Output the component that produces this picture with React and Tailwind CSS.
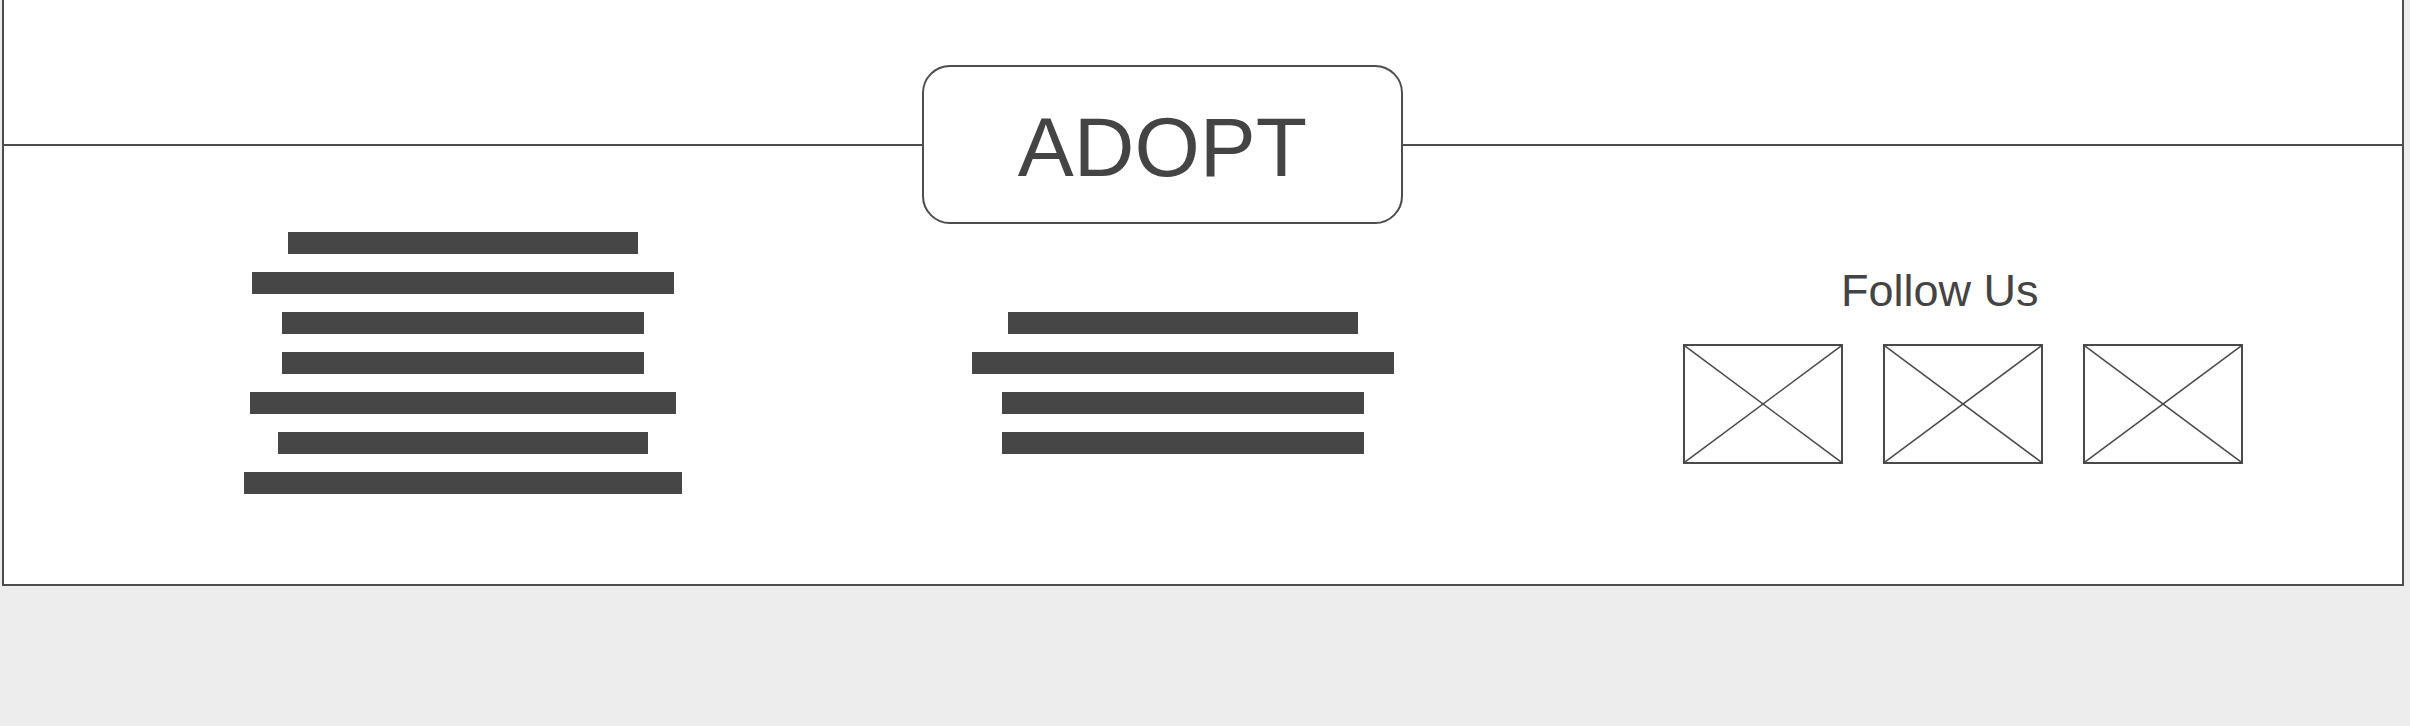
import React from "react";

const leftBars = [350, 422, 362, 362, 426, 370, 438];
const midBars = [350, 422, 362, 362];

function Bar({ w }) {
  return <div className="h-[22px] bg-[#464646]" style={{ width: w }} />;
}

function ImgPlaceholder() {
  return (
    <div className="relative w-[160px] h-[120px] border-2 border-[#4a4a4a] bg-white">
      <svg className="absolute inset-0 w-full h-full" viewBox="0 0 156 116" preserveAspectRatio="none">
        <line x1="0" y1="0" x2="156" y2="116" stroke="#4a4a4a" strokeWidth="1.5" />
        <line x1="156" y1="0" x2="0" y2="116" stroke="#4a4a4a" strokeWidth="1.5" />
      </svg>
    </div>
  );
}

export default function App() {
  return (
    <div className="min-h-[726px] w-full bg-[#ededed]" style={{ fontFamily: '"Liberation Sans", Arial, sans-serif' }}>
      <div className="ml-[2px] w-[2402px] h-[586px] bg-white border-l-2 border-r-2 border-b-2 border-[#4d4d4d] flex flex-col">
        <div className="pt-[65px]">
          <div className="flex items-center h-[159px]">
            <div className="w-[918px] h-[2px] bg-[#4d4d4d]" />
            <div className="w-[481px] h-[159px] border-2 border-[#4d4d4d] rounded-[28px] flex items-center justify-center bg-white">
              <span className="text-[84px] leading-none text-[#444444] pt-[4px]">ADOPT</span>
            </div>
            <div className="flex-1 h-[2px] bg-[#4d4d4d]" />
          </div>
        </div>
        <div className="flex items-start">
          <div className="w-[918px] pt-[8px] flex flex-col items-center gap-[18px]">
            {leftBars.map((w, i) => (
              <Bar key={i} w={w} />
            ))}
          </div>
          <div className="w-[522px] pt-[88px] flex flex-col items-center gap-[18px]">
            {midBars.map((w, i) => (
              <Bar key={i} w={w} />
            ))}
          </div>
          <div className="flex-1 pl-[239px] pt-[33px] flex flex-col items-start">
            <div className="ml-[158px] text-[45px] text-[#444444]">Follow Us</div>
            <div className="mt-[19px] flex gap-[40px]">
              <ImgPlaceholder />
              <ImgPlaceholder />
              <ImgPlaceholder />
            </div>
          </div>
        </div>
      </div>
    </div>
  );
}
